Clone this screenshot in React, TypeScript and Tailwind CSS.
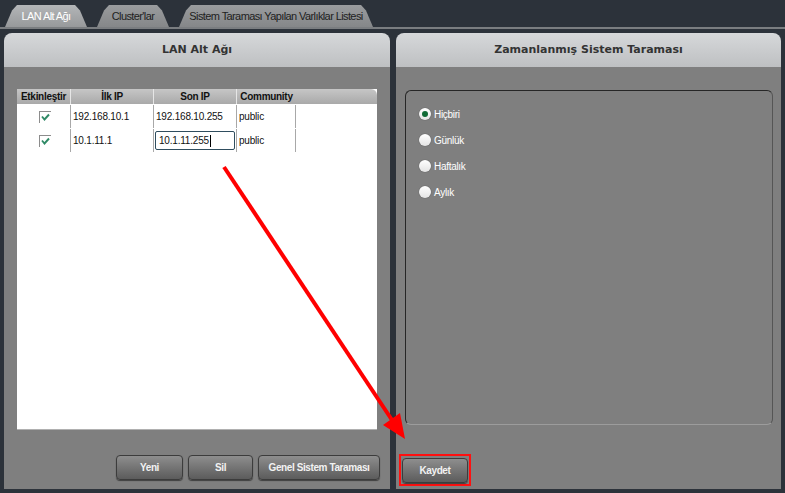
import React from "react";

const tabs = [
  { label: "LAN Alt Ağı", w: "w-[82px]", active: true },
  { label: "Cluster'lar", w: "w-[72px]", active: false },
  { label: "Sistem Taraması Yapılan Varlıklar Listesi", w: "w-[194px]", active: false },
];

const rows = [
  { first: "192.168.10.1", last: "192.168.10.255", community: "public", editing: false },
  { first: "10.1.11.1", last: "10.1.11.255", community: "public", editing: true },
];

const options = ["Hiçbiri", "Günlük", "Haftalık", "Aylık"];

function Check() {
  return (
    <span className="flex h-[12px] w-[12px] items-center justify-center border-l border-t border-[#8c8c8c] bg-white">
      <svg width="9" height="8" viewBox="0 0 9 8">
        <path d="M1 3.5 L3.5 6.5 L8 1.5" fill="none" stroke="#2f8a66" strokeWidth="1.9" />
      </svg>
    </span>
  );
}

function GrayButton({ label, w }: { label: string; w: string }) {
  return (
    <button
      className={`${w} h-[25px] rounded-[4px] border border-[#3c3c3c] bg-gradient-to-b from-[#8e8e8e] to-[#5c5c5c] text-[10px] font-bold tracking-[-0.4px] text-[#f2f2f2] shadow-[0_1px_1px_rgba(0,0,0,0.5)]`}
    >
      {label}
    </button>
  );
}

function PanelHeader({ title }: { title: string }) {
  return (
    <div className="flex h-[34px] items-center justify-center rounded-t-[8px] bg-gradient-to-b from-[#d6d8da] to-[#bec0c2] font-['DejaVu_Sans',sans-serif] text-[11px] font-bold text-[#333]">
      {title}
    </div>
  );
}

export default function App() {
  return (
    <div className="relative h-[493px] w-[785px] overflow-hidden bg-[#2c323a] font-['Liberation_Sans',Arial,sans-serif]">
      {/* Tabs */}
      <div className="flex h-[27px] items-end gap-[10px] pl-[5px]">
        {tabs.map((t) => (
          <div
            key={t.label}
            className={`${t.w} flex h-[22px] items-center justify-center text-[11px] tracking-[-0.6px] [clip-path:polygon(0_100%,7px_25%,12px_0,calc(100%-12px)_0,calc(100%-7px)_25%,100%_100%)] ${
              t.active
                ? "bg-gradient-to-b from-[#b4b6b8] to-[#97999b] text-white"
                : "bg-gradient-to-b from-[#9a9c9e] to-[#858789] text-[#1e1e1e]"
            }`}
          >
            {t.label}
          </div>
        ))}
      </div>
      <div className="h-[2px] bg-[#7a7d80]" />

      {/* Panels */}
      <div className="mt-[4px] flex h-[456px] gap-[6px] pl-[4px]">
        {/* Left panel */}
        <div className="flex w-[386px] flex-col">
          <PanelHeader title="LAN Alt Ağı" />
          <div className="flex flex-1 flex-col bg-[#7f7f7f] pl-[13px] pr-[10px] pt-[22px]">
            <div className="h-[341px] w-[360px] border-b border-[#b0b0b0] bg-white">
              <div className="flex h-[15px] rounded-tr-[6px] bg-gradient-to-b from-[#c6c6c6] to-[#a9a9a9] text-[10px] font-bold tracking-[-0.3px] text-[#111]">
                <div className="flex w-[54px] items-center justify-center border-r border-[#e6e6e6]">Etkinleştir</div>
                <div className="flex w-[83px] items-center justify-center border-r border-[#e6e6e6]">İlk IP</div>
                <div className="flex w-[83px] items-center justify-center border-r border-[#e6e6e6]">Son IP</div>
                <div className="flex w-[59px] items-center justify-center">Community</div>
              </div>
              {rows.map((r) => (
                <div key={r.first} className="flex h-[24px] pt-px text-[10px] tracking-[-0.2px] text-[#111]">
                  <div className="flex w-[54px] items-center justify-center border-r border-[#a8a8a8] pl-[2px]">
                    <Check />
                  </div>
                  <div className="flex w-[83px] items-center border-r border-[#a8a8a8] pl-[2px]">{r.first}</div>
                  <div className="flex w-[83px] items-center border-r border-[#a8a8a8] px-[1px]">
                    {r.editing ? (
                      <div className="flex h-[19px] w-full items-center rounded-[2px] border border-[#2f4d5e] pl-[3px]">
                        {r.last}
                        <span className="ml-[1px] h-[12px] w-px bg-black" />
                      </div>
                    ) : (
                      <span className="pl-[1px]">{r.last}</span>
                    )}
                  </div>
                  <div className="flex w-[59px] items-center border-r border-[#a8a8a8] pl-[2px]">{r.community}</div>
                </div>
              ))}
            </div>
            <div className="mt-[25px] flex justify-end gap-[5px]">
              <GrayButton label="Yeni" w="w-[67px]" />
              <GrayButton label="Sil" w="w-[65px]" />
              <GrayButton label="Genel Sistem Taraması" w="w-[122px]" />
            </div>
          </div>
        </div>

        {/* Right panel */}
        <div className="flex w-[385px] flex-col">
          <PanelHeader title="Zamanlanmış Sistem Taraması" />
          <div className="flex flex-1 flex-col bg-[#7f7f7f] pl-[9px] pr-[8px] pt-[23px]">
            <div className="h-[335px] rounded-[6px] border border-[#262626] border-b-[#9c9c9c] border-r-[#555] pl-[13px] pt-[17px]">
              <div className="flex flex-col gap-[14px]">
                {options.map((o, i) => (
                  <div key={o} className="flex h-[12px] items-center gap-[3px] text-[10px] tracking-[-0.3px] text-white">
                    <span className="flex h-[12px] w-[12px] items-center justify-center rounded-full bg-gradient-to-b from-white to-[#e4e4e4] shadow-[0_0_1px_rgba(0,0,0,0.6)]">
                      {i === 0 && <span className="h-[6px] w-[6px] rounded-full bg-[#0f6a35]" />}
                    </span>
                    {o}
                  </div>
                ))}
              </div>
            </div>
            <div className="mt-[29px] ml-[-6px] flex">
              <div className="border-2 border-[#ff1010] p-px">
                <GrayButton label="Kaydet" w="w-[66px]" />
              </div>
            </div>
          </div>
        </div>
      </div>

      {/* Annotation arrow */}
      <svg className="pointer-events-none absolute left-0 top-0" width="785" height="493">
        <line x1="224" y1="167" x2="392" y2="420" stroke="#ff0000" strokeWidth="4" />
        <polygon points="405,439 383,425 400,413" fill="#ff0000" />
      </svg>
    </div>
  );
}
